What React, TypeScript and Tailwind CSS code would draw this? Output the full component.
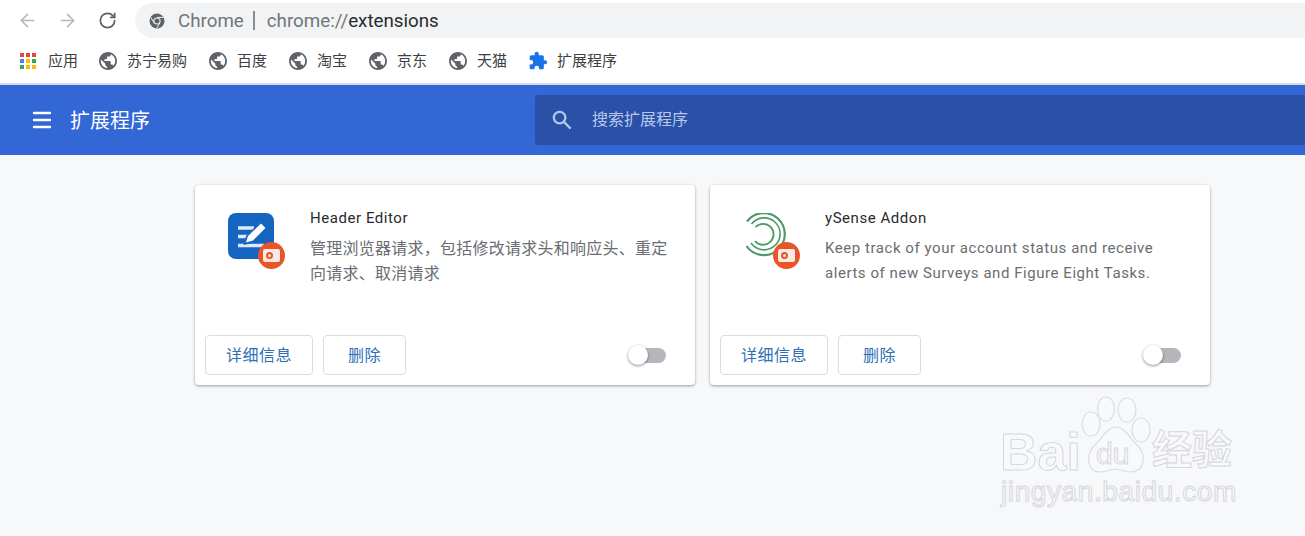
import { Menu, ArrowLeft, ArrowRight, RotateCw } from "lucide-react";

const font = "font-['Roboto','Noto_Sans_CJK_SC',sans-serif]";

const Globe = () => (
  <svg width="18" height="18" viewBox="2 2 20 20" className="shrink-0" fill="#5f6368">
    <path d="M12 2C6.48 2 2 6.48 2 12s4.48 10 10 10 10-4.48 10-10S17.52 2 12 2zm-1 17.93c-3.95-.49-7-3.85-7-7.93 0-.62.08-1.21.21-1.79L9 15v1c0 1.1.9 2 2 2v1.93zm6.9-2.54c-.26-.81-1-1.39-1.9-1.39h-1v-3c0-.55-.45-1-1-1H8v-2h2c.55 0 1-.45 1-1V7h2c1.1 0 2-.9 2-2v-.41c2.93 1.19 5 4.06 5 7.41 0 2.08-.8 3.97-2.1 5.39z" />
  </svg>
);

const Puzzle = () => (
  <svg width="20" height="20" viewBox="0 0 24 24" className="shrink-0" fill="#1a73e8">
    <path d="M20.5 11H19V7c0-1.1-.9-2-2-2h-4V3.5a2.5 2.5 0 0 0-5 0V5H4c-1.1 0-2 .9-2 2v3.8h1.5a2.7 2.7 0 0 1 0 5.4H2V20c0 1.1.9 2 2 2h3.8v-1.5a2.7 2.7 0 0 1 5.4 0V22H17c1.1 0 2-.9 2-2v-4h1.5a2.5 2.5 0 0 0 0-5z" />
  </svg>
);

const AppsGrid = () => {
  const colors = ["#ea4335", "#ea4335", "#ea4335", "#4285f4", "#fbbc04", "#34a853", "#34a853", "#fbbc04", "#fbbc04"];
  return (
    <div className="grid h-[16px] w-[16px] shrink-0 grid-cols-3 gap-[2px]">
      {colors.map((c, i) => (
        <span key={i} className="block" style={{ background: c }} />
      ))}
    </div>
  );
};

const ChromeDot = () => (
  <svg width="16" height="16" viewBox="0 0 16 16" className="shrink-0">
    <circle cx="8" cy="8" r="7.5" fill="#5f6368" />
    <circle cx="8" cy="8" r="3.6" fill="#f1f3f4" />
    <circle cx="8" cy="8" r="2.5" fill="#5f6368" />
    <path d="M8 4.4h6.4M5 9.8 1.9 4.4M10.9 9.8 7.8 15" stroke="#f1f3f4" strokeWidth="1" />
  </svg>
);

const SearchGlyph = () => (
  <svg width="20" height="20" viewBox="0 0 20 20" fill="none" stroke="#b9c8ea" strokeWidth="2.3" className="shrink-0">
    <circle cx="7.6" cy="7.6" r="5.8" />
    <path d="M11.8 11.8 18.6 18.6" />
  </svg>
);

const Badge = () => (
  <div className="absolute left-[30px] top-[29px] flex h-[27px] w-[27px] items-center justify-center rounded-full bg-[#ea5429]">
    <div className="flex h-[13px] w-[17px] items-center justify-center rounded-[2px] bg-[#fbe9e3]">
      <span className="mr-[4px] h-[7px] w-[7px] rounded-full border-2 border-[#ea5429]" />
    </div>
  </div>
);

const HeaderEditorIcon = () => (
  <div className="relative h-[58px] w-[58px]">
    <svg width="46" height="46" viewBox="0 0 46 46">
      <rect width="46" height="46" rx="8" fill="#1565c0" />
      <path d="M10 15h16M10 23.5h13M10 32.5h26" stroke="#dfe8f5" strokeWidth="3.6" fill="none" />
      <path d="M15.5 32l2.5-9L33 8l7 7-15 15z" fill="#1565c0" />
      <path d="M18 29.5l2-6.5L33 10.5l4.5 4.5L25 27.5z" fill="#fff" />
    </svg>
    <Badge />
  </div>
);

const YSenseIcon = () => (
  <div className="relative h-[58px] w-[58px]">
    <svg width="46" height="46" viewBox="0 0 46 46" fill="none" stroke="#4c9a68">
      <path d="M4 8.5A21 21 0 1 1 3.5 33" strokeWidth="2.2" />
      <path d="M8.5 11A16 16 0 1 1 8 30" strokeWidth="1.6" />
      <path d="M12.5 14A10.5 10.5 0 1 1 12 28" strokeWidth="1.8" />
    </svg>
    <Badge />
  </div>
);

const Toggle = () => (
  <div className="relative h-[15px] w-[30px] rounded-full bg-[#b5b7bd]">
    <div className="absolute left-[-8px] top-[-3px] h-[20px] w-[20px] rounded-full bg-white shadow-[0_1px_3px_rgba(0,0,0,0.45)]" />
  </div>
);

const buttonStyle =
  "flex h-[40px] items-center justify-center rounded-[4px] border border-[#dadce0] bg-white pt-[1px] text-[16px] tracking-[0.5px] text-[#2f6fb5]";

interface ExtensionCardProps {
  name: string;
  icon: React.ReactNode;
  description: string[];
  descStyle: string;
}

const ExtensionCard = ({ name, icon, description, descStyle }: ExtensionCardProps) => (
  <div className="flex h-[200px] w-[500px] flex-col rounded-[4px] bg-white shadow-[0_1px_3px_rgba(60,64,67,0.5)]">
    <div className="flex flex-1 pl-[33px] pt-[23px]">
      <div className="w-[82px] shrink-0 pt-[5px]">{icon}</div>
      <div>
        <p className="text-[15px] leading-[20px] tracking-[0.55px] text-[#292a2d]">{name}</p>
        <div className={`mt-[8px] leading-[25px] text-[#6a6d71] ${descStyle}`}>
          {description.map((line) => (
            <p key={line}>{line}</p>
          ))}
        </div>
      </div>
    </div>
    <div className="flex items-center pb-[10px] pl-[10px] pr-[29px]">
      <div className={`${buttonStyle} w-[108px]`}>详细信息</div>
      <div className={`${buttonStyle} ml-[10px] w-[83px]`}>删除</div>
      <div className="ml-auto">
        <Toggle />
      </div>
    </div>
  </div>
);

const bookmarks = [
  { label: "苏宁易购", width: "w-[110px]" },
  { label: "百度", width: "w-[80px]" },
  { label: "淘宝", width: "w-[80px]" },
  { label: "京东", width: "w-[80px]" },
  { label: "天猫", width: "w-[80px]" },
];

export default function App() {
  return (
    <div className={`relative h-[536px] w-[1305px] overflow-hidden bg-[#f7f8fa] ${font}`}>
      {/* Toolbar */}
      <div className="flex h-[40px] items-start bg-white pt-[3px]">
        <div className="flex h-[35px] w-[135px] shrink-0 items-center pl-[17px]">
          <ArrowLeft size={21} strokeWidth={1.8} className="text-[#b6b8bb]" />
          <ArrowRight size={21} strokeWidth={1.8} className="ml-[19px] text-[#b6b8bb]" />
          <RotateCw size={19} strokeWidth={2.2} className="ml-[20px] text-[#5f6368]" />
        </div>
        <div className="flex h-[35px] flex-1 items-center rounded-l-full bg-[#f1f3f4] pl-[14px] text-[18.75px]">
          <ChromeDot />
          <span className="ml-[13px] pt-[1px] text-[#72767a]">Chrome</span>
          <span className="ml-[9px] h-[19px] w-[2px] bg-[#8a8d91]" />
          <span className="ml-[12px] pt-[1px] text-[#72767a]">chrome://</span>
          <span className="pt-[1px] text-[#2b2c2e]">extensions</span>
        </div>
      </div>

      {/* Bookmarks */}
      <div className="flex h-[43px] items-center bg-white pb-[1px] pl-[20px] text-[15px] text-[#3c4043]">
        <div className="flex w-[79px] items-center gap-[12px]">
          <AppsGrid />
          <span>应用</span>
        </div>
        {bookmarks.map((b) => (
          <div key={b.label} className={`flex items-center gap-[10px] ${b.width}`}>
            <Globe />
            <span>{b.label}</span>
          </div>
        ))}
        <div className="ml-[-1px] flex items-center gap-[9px]">
          <Puzzle />
          <span>扩展程序</span>
        </div>
      </div>
      <div className="h-[2px] bg-[#d9dbe6]" />

      {/* Page header */}
      <div className="flex h-[70px] items-center bg-[#3367d6]">
        <div className="flex w-[535px] shrink-0 items-center pl-[30px]">
          <Menu size={24} strokeWidth={2.4} className="text-white" />
          <span className="ml-[16px] pt-[2px] text-[20px] text-white">扩展程序</span>
        </div>
        <div className="flex h-[50px] flex-1 items-center rounded-l-[3px] bg-[#2a51a8] pl-[17px]">
          <SearchGlyph />
          <span className="ml-[20px] text-[16px] text-[#b9c8ea]">搜索扩展程序</span>
        </div>
      </div>

      {/* Cards */}
      <div className="flex gap-[15px] pl-[195px] pt-[30px]">
        <ExtensionCard
          name="Header Editor"
          icon={<HeaderEditorIcon />}
          descStyle="text-[16px] tracking-[0.25px]"
          description={["管理浏览器请求，包括修改请求头和响应头、重定", "向请求、取消请求"]}
        />
        <ExtensionCard
          name="ySense Addon"
          icon={<YSenseIcon />}
          descStyle="text-[15px] tracking-[0.55px]"
          description={["Keep track of your account status and receive", "alerts of new Surveys and Figure Eight Tasks."]}
        />
      </div>

      {/* Watermark */}
      <div className="absolute left-[1000px] top-[396px] select-none font-['Liberation_Sans','Noto_Sans_CJK_SC',sans-serif] text-[#f8f9fb] [-webkit-text-stroke:1px_#d6d7da]">
        <svg width="72" height="80" viewBox="0 0 72 80" fill="#f8f9fb" stroke="#dcdde0" strokeWidth="1.2" className="absolute left-[80px] top-[0px]">
          <ellipse cx="11" cy="28" rx="9" ry="12" />
          <ellipse cx="26" cy="13" rx="8.5" ry="12" />
          <ellipse cx="47" cy="14" rx="9" ry="12" />
          <ellipse cx="61" cy="34" rx="9" ry="12" />
          <path d="M36 31C46 31 50 44 58 50C66 57 66 76 50 76C44 76 40 73 36 73C32 73 26 76 20 76C6 76 6 57 14 50C22 44 26 31 36 31Z" />
        </svg>
        <div className="absolute left-[0px] top-[28px] whitespace-nowrap text-[52px] font-bold leading-[56px]">Bai</div>
        <div className="absolute left-[96px] top-[43px] whitespace-nowrap text-[30px] leading-[30px]">du</div>
        <div className="absolute left-[152px] top-[31px] whitespace-nowrap text-[40px] font-bold leading-[46px]">经验</div>
        <div className="absolute left-[1px] top-[80px] whitespace-nowrap text-[28px] leading-[32px] tracking-[0.6px]">
          jingyan.baidu.com
        </div>
      </div>
    </div>
  );
}
